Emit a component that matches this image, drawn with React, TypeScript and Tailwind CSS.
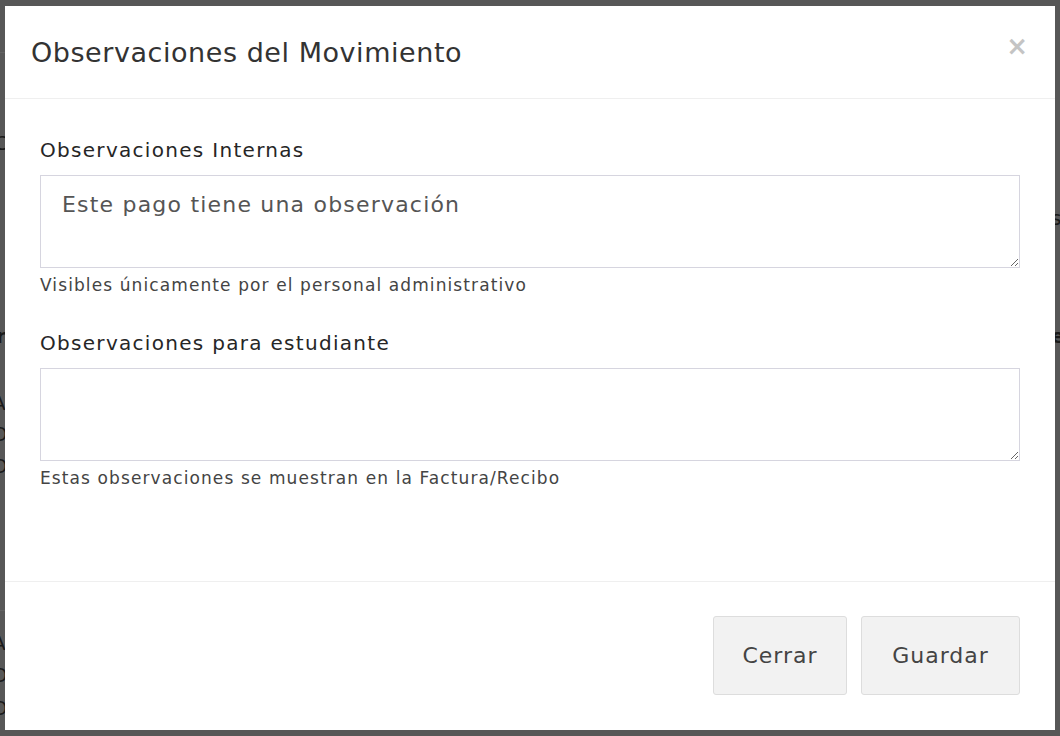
import React from "react";

const font = { fontFamily: '"DejaVu Sans", "Noto Sans", sans-serif' };

function Glimpse({ cls, ch }: { cls: string; ch: string }) {
  return <span className={"absolute text-[20px] text-[#1a1a1a] " + cls}>{ch}</span>;
}

export default function App() {
  return (
    <div className="relative w-[1060px] h-[736px] overflow-hidden bg-[#575757]" style={font}>
      {/* background page glimpses behind the overlay */}
      <div className="absolute left-0 top-[52px] w-[6px] h-px bg-[#626262]" />
      <div className="absolute left-0 top-[610px] w-[6px] h-px bg-[#626262]" />
      <Glimpse cls="left-[-6px] top-[128px]" ch="C" />
      <Glimpse cls="left-[-4px] top-[321px] font-bold" ch="r" />
      <Glimpse cls="left-[-8px] top-[388px]" ch="A" />
      <Glimpse cls="left-[-8px] top-[419px]" ch="O" />
      <Glimpse cls="left-[-8px] top-[451px]" ch="O" />
      <Glimpse cls="left-[-8px] top-[628px]" ch="A" />
      <Glimpse cls="left-[-8px] top-[660px]" ch="O" />
      <Glimpse cls="left-[-8px] top-[693px]" ch="O" />
      <Glimpse cls="left-[1051px] top-[203px]" ch="s" />
      <Glimpse cls="left-[1051px] top-[321px] font-bold" ch="e" />

      <div className="relative ml-[5px] mt-[6px] w-[1050px] h-[724px] bg-white flex flex-col">
        <div className="h-[93px] border-b border-[#efefef] flex items-center justify-between pl-[26px] pr-[27px]">
          <h4 className="text-[27px] text-[#333] font-normal tracking-[0.55px] pt-[2px]">Observaciones del Movimiento</h4>
          <span className="text-[26px] font-bold text-[#c4c4c4] leading-none -mt-[12px]">×</span>
        </div>
        <div className="flex-1 px-[35px] pt-[38px]">
          <label className="block text-[20px] text-[#262626] tracking-[1.3px] leading-[26px]">Observaciones Internas</label>
          <textarea
            className="mt-[12px] block w-full h-[93px] border border-[#d6d5df] px-[21px] py-[13px] text-[22px] text-[#555] tracking-[1.2px] leading-[32px] outline-none resize-y"
            defaultValue="Este pago tiene una observación"
          />
          <p className="mt-[4px] text-[17px] text-[#444] tracking-[1.1px] leading-[26px]">Visibles únicamente por el personal administrativo</p>
          <label className="mt-[32px] block text-[20px] text-[#262626] tracking-[1.3px] leading-[26px]">Observaciones para estudiante</label>
          <textarea
            className="mt-[12px] block w-full h-[93px] border border-[#d6d5df] px-[21px] py-[13px] text-[22px] text-[#555] tracking-[1.2px] leading-[32px] outline-none resize-y"
            defaultValue=""
          />
          <p className="mt-[4px] text-[17px] text-[#444] tracking-[1.1px] leading-[26px]">Estas observaciones se muestran en la Factura/Recibo</p>
        </div>
        <div className="h-[149px] border-t border-[#efefef] flex items-start justify-end gap-[14px] pr-[35px] pt-[34px]">
          <button className="h-[79px] w-[134px] rounded-[3px] border border-[#ddd] bg-[#f2f2f2] text-[22px] tracking-[1px] text-[#444]">Cerrar</button>
          <button className="h-[79px] w-[159px] rounded-[3px] border border-[#ddd] bg-[#f2f2f2] text-[22px] tracking-[1px] text-[#444]">Guardar</button>
        </div>
      </div>
    </div>
  );
}
